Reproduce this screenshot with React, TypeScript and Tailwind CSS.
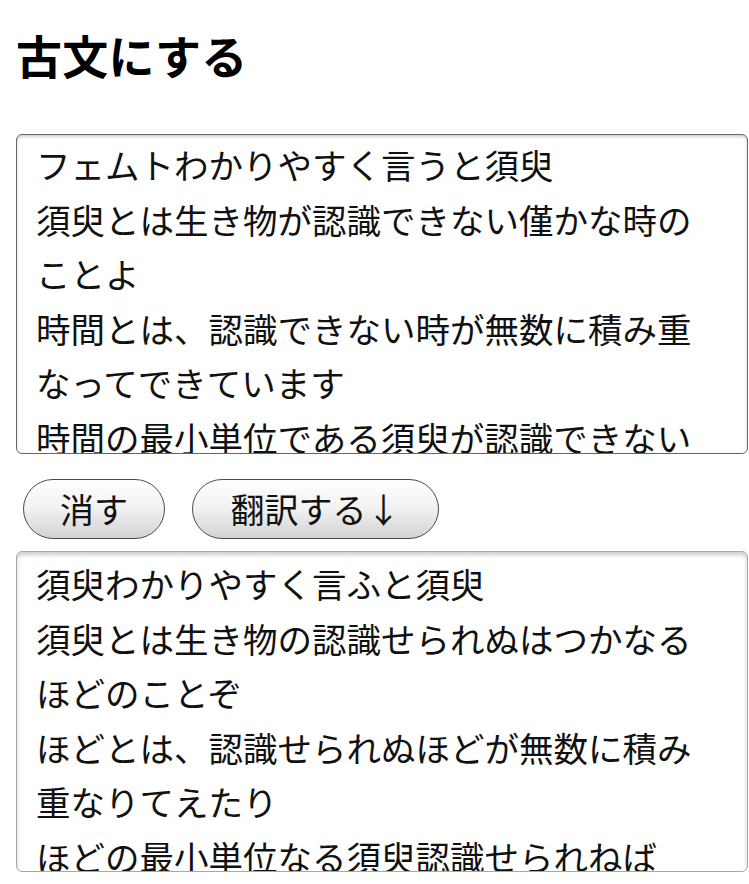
import React from 'react';

const source =
    'フェムトわかりやすく言うと須臾\n須臾とは生き物が認識できない僅かな時のことよ\n時間とは、認識できない時が無数に積み重なってできています\n時間の最小単位である須臾が認識できない';

const translated =
    '須臾わかりやすく言ふと須臾\n須臾とは生き物の認識せられぬはつかなるほどのことぞ\nほどとは、認識せられぬほどが無数に積み重なりてえたり\nほどの最小単位なる須臾認識せられねば';

const font = { fontFamily: '"Noto Sans CJK JP", sans-serif' };

const PillButton: React.FC<{ label: string; width: string }> = ({ label, width }) => (
    <button
        className={`${width} h-[60px] rounded-full border border-[#4a4a4a] bg-gradient-to-b from-white via-[#f1f1f1] to-[#d2d2d2] text-[34px] leading-none text-[#111] flex items-center justify-center`}
    >
        {label}
    </button>
);

const App: React.FC = () => {
    return (
        <div className="min-h-[884px] bg-white px-4 text-black" style={font}>
            <h1 className="pt-[31px] text-[46px] leading-[46px] font-bold tracking-[0.2px]">古文にする</h1>

            <textarea
                readOnly
                defaultValue={source}
                className="mt-[57px] block w-[732px] h-[320px] resize-none overflow-hidden rounded-[6px] border border-[#666] bg-white pl-[19px] pr-[30px] pt-[2px] text-[34.5px] leading-[54.5px] text-[#111] shadow-[inset_0_2px_3px_rgba(0,0,0,0.18)] outline-none"
            />

            <div className="mt-[25px] ml-[7px] flex gap-[27px]">
                <PillButton label="消す" width="w-[142px]" />
                <PillButton label="翻訳する↓" width="w-[247px]" />
            </div>

            <textarea
                readOnly
                defaultValue={translated}
                className="mt-[12px] block w-[732px] h-[321px] resize-none overflow-hidden rounded-[6px] border border-[#a8a8a8] bg-white pl-[19px] pr-[30px] pt-[4px] text-[34.5px] leading-[54.5px] text-[#111] shadow-[inset_0_3px_4px_rgba(0,0,0,0.2)] outline-none"
            />
        </div>
    );
};

export default App;
